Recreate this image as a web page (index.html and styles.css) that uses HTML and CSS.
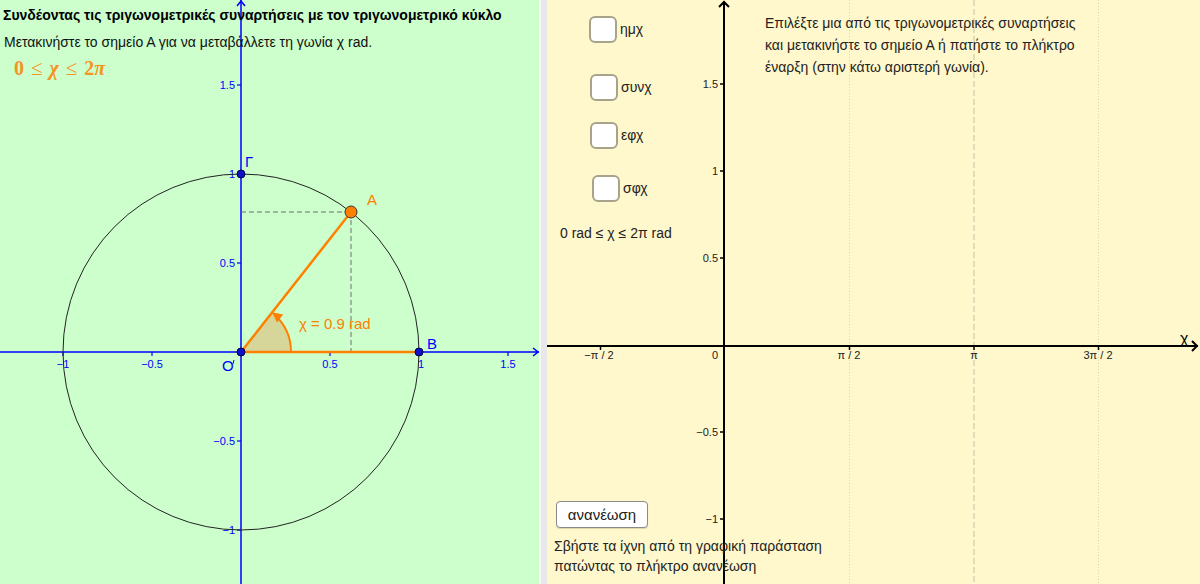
FILE: index.html
```html
<!DOCTYPE html>
<html lang="el">
<head>
<meta charset="utf-8">
<title>Τριγωνομετρικός κύκλος</title>
<link rel="stylesheet" href="styles.css">
</head>
<body>
<div class="app">
  <section class="panel panel-left">
    <svg class="canvas" viewBox="0 0 539 584" width="539" height="584">
      <!-- axes -->
      <line x1="241" y1="0" x2="241" y2="584" class="ax-blue"/>
      <line x1="0" y1="352" x2="539" y2="352" class="ax-blue"/>
      <polyline points="237,6 241,1 245,6" class="ax-blue-arrow"/>
      <polyline points="533,348 538,352 533,356" class="ax-blue-arrow"/>
      <!-- ticks -->
      <g class="ax-blue-tick">
        <line x1="237" y1="85" x2="241" y2="85"/>
        <line x1="237" y1="174" x2="241" y2="174"/>
        <line x1="237" y1="263" x2="241" y2="263"/>
        <line x1="237" y1="441" x2="241" y2="441"/>
        <line x1="237" y1="530" x2="241" y2="530"/>
        <line x1="63" y1="352" x2="63" y2="356"/>
        <line x1="152" y1="352" x2="152" y2="356"/>
        <line x1="330" y1="352" x2="330" y2="356"/>
        <line x1="419" y1="352" x2="419" y2="356"/>
        <line x1="508" y1="352" x2="508" y2="356"/>
      </g>
      <g class="lbl-blue" text-anchor="end">
        <text x="235" y="89">1.5</text>
        <text x="235" y="178">1</text>
        <text x="235" y="267">0.5</text>
        <text x="235" y="445">−0.5</text>
        <text x="235" y="534">−1</text>
      </g>
      <g class="lbl-blue" text-anchor="middle">
        <text x="63" y="368">−1</text>
        <text x="152" y="368">−0.5</text>
        <text x="330" y="368">0.5</text>
        <text x="421" y="368">1</text>
        <text x="508" y="368">1.5</text>
      </g>
      <!-- unit circle -->
      <circle cx="241" cy="352" r="178" fill="none" stroke="#222" stroke-width="1"/>
      <!-- angle sector -->
      <path d="M241 352 L291 352 A50 50 0 0 0 272.1 312.8 Z" fill="#d6d69b"/>
      <path d="M291 352 A50 50 0 0 0 274.5 314.8" fill="none" stroke="#ff8000" stroke-width="2"/>
      <polygon points="272.1,312.3 283.2,314.6 277,322.4" fill="#ff8000"/>
      <!-- dashed projections -->
      <line x1="241" y1="212" x2="351" y2="212" class="dash"/>
      <line x1="351" y1="212" x2="351" y2="352" class="dash"/>
      <!-- segments -->
      <line x1="241" y1="352" x2="419" y2="352" class="seg"/>
      <line x1="241" y1="352" x2="351" y2="212" class="seg"/>
      <!-- points -->
      <circle cx="241" cy="352" r="4" class="pt"/>
      <circle cx="419" cy="352" r="4" class="pt"/>
      <circle cx="241" cy="174" r="4" class="pt"/>
      <circle cx="351" cy="212" r="6" fill="#ff8000" stroke="#333" stroke-width="1"/>
      <!-- labels -->
      <text x="222" y="371" class="name-blue">O</text>
      <line x1="234" y1="360" x2="233" y2="364" stroke="#0000ff" stroke-width="1"/>
      <text x="427" y="349" class="name-blue">B</text>
      <text x="245" y="167" class="name-blue">Γ</text>
      <text x="367" y="205" class="name-orange">A</text>
      <text x="299" y="329" class="name-orange">χ = 0.9 rad</text>
    </svg>
    <div class="left-text">
      <h1 class="title">Συνδέοντας τις τριγωνομετρικές συναρτήσεις με τον τριγωνομετρικό κύκλο</h1>
      <p class="hint">Μετακινήστε το σημείο Α για να μεταβάλλετε τη γωνία χ rad.</p>
      <p class="formula">0<span class="rel">≤</span><i>χ</i><span class="rel">≤</span>2<i>π</i></p>
    </div>
  </section>

  <div class="divider"></div>

  <section class="panel panel-right">
    <svg class="canvas" viewBox="0 0 653 584" width="653" height="584">
      <!-- grid -->
      <line x1="302.5" y1="0" x2="302.5" y2="584" class="grid-dot"/>
      <line x1="427" y1="0" x2="427" y2="584" class="grid-dash"/>
      <line x1="551.5" y1="0" x2="551.5" y2="584" class="grid-dot"/>
      <!-- axes -->
      <line x1="0" y1="346" x2="651" y2="346" class="ax-black"/>
      <line x1="177" y1="1" x2="177" y2="584" class="ax-black"/>
      <polyline points="172,7 177,2 182,7" class="ax-black-arrow"/>
      <polyline points="645,341 650,346 645,351" class="ax-black-arrow"/>
      <g class="ax-black-tick">
        <line x1="53.5" y1="346" x2="53.5" y2="350"/>
        <line x1="302.5" y1="346" x2="302.5" y2="350"/>
        <line x1="427" y1="346" x2="427" y2="350"/>
        <line x1="551.5" y1="346" x2="551.5" y2="350"/>
        <line x1="173" y1="84" x2="177" y2="84"/>
        <line x1="173" y1="171" x2="177" y2="171"/>
        <line x1="173" y1="258" x2="177" y2="258"/>
        <line x1="173" y1="432" x2="177" y2="432"/>
        <line x1="173" y1="519" x2="177" y2="519"/>
      </g>
      <g class="lbl-black" text-anchor="middle">
        <text x="52" y="359">−π / 2</text>
        <text x="302" y="359">π / 2</text>
        <text x="427" y="359">π</text>
        <text x="551" y="359">3π / 2</text>
      </g>
      <g class="lbl-black" text-anchor="end">
        <text x="171" y="359">0</text>
        <text x="171" y="88">1.5</text>
        <text x="171" y="175">1</text>
        <text x="171" y="262">0.5</text>
        <text x="171" y="436">−0.5</text>
        <text x="171" y="523">−1</text>
      </g>
      <text x="633" y="344" class="name-black">χ</text>
    </svg>
    <div class="right-content">
      <div class="top-row">
        <div class="checks">
          <label class="check check-1"><span class="box"></span>ημχ</label>
          <label class="check check-2"><span class="box"></span>συνχ</label>
          <label class="check check-3"><span class="box"></span>εφχ</label>
          <label class="check check-4"><span class="box"></span>σφχ</label>
          <p class="range">0 rad ≤ χ ≤ 2π rad</p>
        </div>
        <p class="instructions">Επιλέξτε μια από τις τριγωνομετρικές συναρτήσεις<br>και μετακινήστε το σημείο Α ή πατήστε το πλήκτρο<br>έναρξη (στην κάτω αριστερή γωνία).</p>
      </div>
      <div class="bottom">
        <button class="refresh" type="button">ανανέωση</button>
        <p class="note">Σβήστε τα ίχνη από τη γραφική παράσταση<br>πατώντας το πλήκτρο ανανέωση</p>
      </div>
    </div>
  </section>
</div>
</body>
</html>
```

FILE: styles.css
```css
* { box-sizing: border-box; }

html, body {
  margin: 0;
  padding: 0;
  width: 1200px;
  height: 584px;
  overflow: hidden;
  font-family: "Liberation Sans", Arial, sans-serif;
}

.app {
  display: flex;
  width: 1200px;
  height: 584px;
}

.panel {
  position: relative;
  height: 584px;
  overflow: hidden;
}

.panel-left {
  width: 539px;
  background: #ccffcc;
}

.divider {
  width: 8px;
  height: 584px;
  background: #e8e8e8;
  border-left: 2px solid #f9f9f9;
}

.panel-right {
  width: 653px;
  background: #fff8cc;
}

.canvas {
  position: absolute;
  left: 0;
  top: 0;
  display: block;
}

/* svg styles */
.ax-blue { stroke: #0000ff; stroke-width: 1.5; }
.ax-blue-arrow { fill: none; stroke: #0000ff; stroke-width: 1.5; }
.ax-blue-tick line { stroke: #0000ff; stroke-width: 1.2; }
.lbl-blue { fill: #0000ff; font-size: 11px; font-family: "Liberation Sans", Arial, sans-serif; }
.name-blue { fill: #0000ff; font-size: 15px; font-family: "Liberation Sans", Arial, sans-serif; }
.name-orange { fill: #ff8000; font-size: 15px; font-family: "Liberation Sans", Arial, sans-serif; }
.dash { stroke: #6e6e6e; stroke-width: 1; stroke-dasharray: 5 3; }
.seg { stroke: #ff8000; stroke-width: 2.5; }
.pt { fill: #1010c8; stroke: #000040; stroke-width: 1; }

.grid-dot { stroke: #d8d4b0; stroke-width: 1; stroke-dasharray: 1 2; }
.grid-dash { stroke: #c4c0a8; stroke-width: 1; stroke-dasharray: 6 3; }
.ax-black { stroke: #000; stroke-width: 2; }
.ax-black-arrow { fill: none; stroke: #000; stroke-width: 2; }
.ax-black-tick line { stroke: #000; stroke-width: 1.5; }
.lbl-black { fill: #222; font-size: 11px; font-family: "Liberation Sans", Arial, sans-serif; }
.name-black { fill: #000; font-size: 16px; font-family: "Liberation Sans", Arial, sans-serif; }

/* left text */
.left-text {
  position: relative;
  padding: 5px 0 0 3px;
  color: #000;
}

.title {
  margin: 0;
  font-size: 14px;
  font-weight: bold;
  line-height: 20px;
}

.hint {
  margin: 7px 0 0 1px;
  font-size: 14px;
  line-height: 20px;
  color: #111;
}

.formula {
  margin: 6px 0 0 11px;
  font-family: "Liberation Serif", "Times New Roman", serif;
  font-weight: bold;
  font-size: 20px;
  line-height: 20px;
  color: #f7931e;
}

.formula i { font-style: italic; }

.formula .rel {
  margin: 0 7px;
  font-weight: normal;
  font-size: 21px;
}

/* right content */
.right-content {
  position: relative;
  display: flex;
  flex-direction: column;
  height: 584px;
  padding-bottom: 8px;
  color: #222;
  font-size: 14px;
}

.top-row {
  display: grid;
  grid-template-columns: 218px 1fr;
}

.checks {
  display: flex;
  flex-direction: column;
  align-items: flex-start;
  padding: 16px 0 0 13px;
}

.check {
  display: flex;
  align-items: center;
  gap: 3px;
  height: 27px;
  font-size: 14px;
  line-height: 27px;
  color: #222;
}

.check-1 { margin-left: 29px; }
.check-2 { margin: 31px 0 0 30px; }
.check-3 { margin: 21px 0 0 30px; }
.check-4 { margin: 26px 0 0 32px; }

.box {
  width: 28px;
  height: 27px;
  background: #fff;
  border: 2px solid #a8a48c;
  border-radius: 6px;
}

.range {
  margin: 21px 0 0 0;
  font-size: 14px;
  line-height: 20px;
  color: #222;
}

.instructions {
  margin: 12px 0 0 0;
  font-size: 14px;
  line-height: 22px;
  color: #222;
}

.bottom {
  margin-top: auto;
  display: flex;
  flex-direction: column;
  align-items: flex-start;
}

.refresh {
  margin-left: 9px;
  width: 92px;
  height: 27px;
  padding: 0;
  background: #fff;
  border: 1px solid #8a8a8a;
  border-radius: 4px;
  font-family: "Liberation Sans", Arial, sans-serif;
  font-size: 15px;
  color: #222;
  box-shadow: 0 1px 1px rgba(0,0,0,0.15);
}

.note {
  margin: 8px 0 0 7px;
  font-size: 14px;
  line-height: 20px;
  color: #222;
}
```
